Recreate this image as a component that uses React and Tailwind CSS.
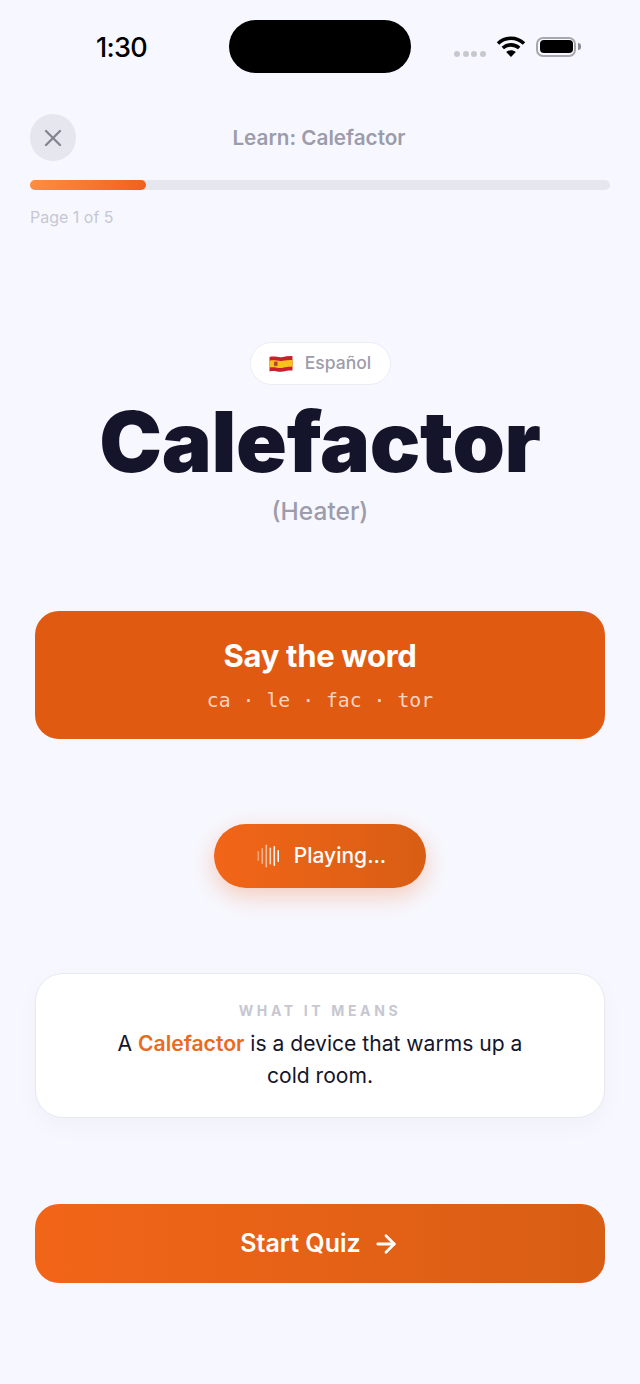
import React from "react";
import { X, ArrowRight } from "lucide-react";

const INTER = { fontFamily: "Inter, sans-serif" };

function Wifi() {
    return (
        <svg width="30" height="22" viewBox="0 0 30 22" fill="none" stroke="#000" strokeWidth="3.6">
            <path d="M2 8.5C9.5 1.5 20.5 1.5 28 8.5" />
            <path d="M6.8 13C11.5 8.8 18.5 8.8 23.2 13" />
            <path d="M15 22L10.2 17C13 14.6 17 14.6 19.8 17Z" fill="#000" stroke="none" />
        </svg>
    );
}

function Battery() {
    return (
        <div className="flex items-center">
            <div className="w-[40px] h-[20px] rounded-[7px] border-2 border-[#a8a8ac] p-[1.5px]">
                <div className="w-full h-full rounded-[4px] bg-black"></div>
            </div>
            <div className="w-[3px] h-[7px] ml-[2px] rounded-r bg-[#8c8c90]"></div>
        </div>
    );
}

function StatusBar() {
    return (
        <div className="h-[114px] pt-[20px] flex items-start">
            <div className="w-[229px] h-[53px] flex items-center pl-[96px]">
                <span className="text-[27px] font-medium text-black tracking-tight leading-none mt-[2px]">1:30</span>
            </div>
            <div className="w-[182px] h-[53px] rounded-[27px] bg-black"></div>
            <div className="h-[53px] flex items-center pl-[43px]">
                <div className="flex gap-[2.5px] mt-[14px] mr-[10.5px]">
                    <div className="w-[6px] h-[6px] rounded-full bg-[#c8c8cc]"></div>
                    <div className="w-[6px] h-[6px] rounded-full bg-[#c8c8cc]"></div>
                    <div className="w-[6px] h-[6px] rounded-full bg-[#c8c8cc]"></div>
                    <div className="w-[6px] h-[6px] rounded-full bg-[#c8c8cc]"></div>
                </div>
                <div className="mr-[10px] -mt-[1px]"><Wifi /></div>
                <Battery />
            </div>
        </div>
    );
}

// the emoji flag has a slight wave in it
function Flag() {
    return (
        <svg width="24" height="18" viewBox="0 0 24 18">
            <path d="M0.5 2C6 0.5 9 3 14 2C17 1.4 20.5 0.8 23.5 1.2V15.6C20.5 15.2 17 16 14 16.6C9 17.6 6 15 0.5 16.6Z" fill="#c8202c" />
            <path d="M0.5 5.8C6 4.4 9 6.8 14 5.8C17 5.2 20.5 4.8 23.5 5V11.8C20.5 11.5 17 12.1 14 12.7C9 13.7 6 11.2 0.5 12.6Z" fill="#f8c21c" />
            <rect x="5" y="6.5" width="3.6" height="4.6" rx="1" fill="#b5482a" />
        </svg>
    );
}

function SoundWave() {
    const bars = [
        [10, 0.4], [16, 0.5], [23, 0.55], [17, 0.75], [20, 0.9], [12, 1],
    ];
    return (
        <svg width="22" height="24" viewBox="0 0 22 24">
            {bars.map(([h, o], i) => (
                <rect key={i} x={0.5 + i * 4} y={12 - h / 2} width="1.6" height={h} rx="0.8" fill="#fff" opacity={o} />
            ))}
        </svg>
    );
}

export default function App() {
    return (
        <div className="w-[640px] h-[1384px] bg-[#f7f8ff] overflow-hidden" style={INTER}>
            <StatusBar />

            {/* Header */}
            <div className="px-[30px]">
                <div className="flex items-center h-[47px]">
                    <button className="w-[46px] h-[47px] rounded-full bg-[#e5e6ee] flex items-center justify-center shrink-0">
                        <X size={28} color="#85858f" strokeWidth={2} />
                    </button>
                    <div className="flex-1 text-center text-[20.7px] font-semibold text-[#9c9cab] pr-[48px]">Learn: Calefactor</div>
                </div>
                <div className="h-[10px] mt-[19px] rounded-full bg-[#e5e6ee]">
                    <div className="w-[116px] h-full rounded-full bg-gradient-to-r from-[#ff8c3f] to-[#f2601a]"></div>
                </div>
                <div className="mt-[17px] text-[16px] leading-[20px] text-[#c6c7d2]">Page 1 of 5</div>
            </div>

            {/* Word */}
            <div className="flex flex-col items-center mt-[115px]">
                <div className="w-[141px] h-[43px] rounded-full bg-white border border-[#ececf3] flex items-center justify-center gap-[12px]">
                    <Flag />
                    <span className="text-[17.5px] font-medium text-[#9c9cab]">Español</span>
                </div>
                <h1 className="mt-[9px] h-[96px] text-[84px] leading-[96px] font-black text-[#14142a] tracking-[-0.004em]">Calefactor</h1>
                <div className="mt-[6px] text-[24.5px] leading-[30px] font-medium text-[#9c9cab]">(Heater)</div>
            </div>

            {/* Say the word */}
            <div className="mx-[35px] mt-[85px] h-[128px] rounded-[24px] bg-[#e05a12] flex flex-col items-center pt-[26px]">
                <div className="text-[31px] leading-[38px] font-bold text-white tracking-[-0.01em]">Say the word</div>
                <div className="mt-[12px] text-[19.8px] leading-[28px] text-white/75" style={{ fontFamily: "'DejaVu Sans Mono', monospace" }}>ca · le · fac · tor</div>
            </div>

            {/* Playing */}
            <div className="flex justify-center mt-[85px]">
                <button className="w-[212px] h-[64px] rounded-full bg-gradient-to-r from-[#f26518] to-[#d85e14] shadow-[0_8px_24px_rgba(242,100,30,0.3)] flex items-center justify-center gap-[15px] pl-[3px] text-white">
                    <SoundWave />
                    <span className="text-[21px] font-medium">Playing...</span>
                </button>
            </div>

            {/* Meaning */}
            <div className="mx-[35px] mt-[85px] h-[145px] rounded-[28px] bg-white border border-[#e8e8f0] shadow-[0_8px_24px_rgba(20,20,42,0.03)] flex flex-col items-center pt-[28px]">
                <div className="text-[14px] leading-[18px] font-bold text-[#c6c7d0] tracking-[3.65px]">WHAT IT MEANS</div>
                <p className="mt-[8px] w-[430px] text-center text-[21.1px] leading-[32px] text-[#14142a]">
                    A <span className="font-semibold text-[#ea6a1f]">Calefactor</span> is a device that warms up a cold room.
                </p>
            </div>

            {/* Start quiz */}
            <div className="mx-[35px] mt-[86px]">
                <button className="w-full h-[79px] rounded-[24px] bg-gradient-to-r from-[#f26518] to-[#d85e14] flex items-center justify-center gap-[11px] text-white">
                    <span className="text-[25px] font-semibold">Start Quiz</span>
                    <ArrowRight size={28} strokeWidth={2.4} />
                </button>
            </div>
        </div>
    );
}
